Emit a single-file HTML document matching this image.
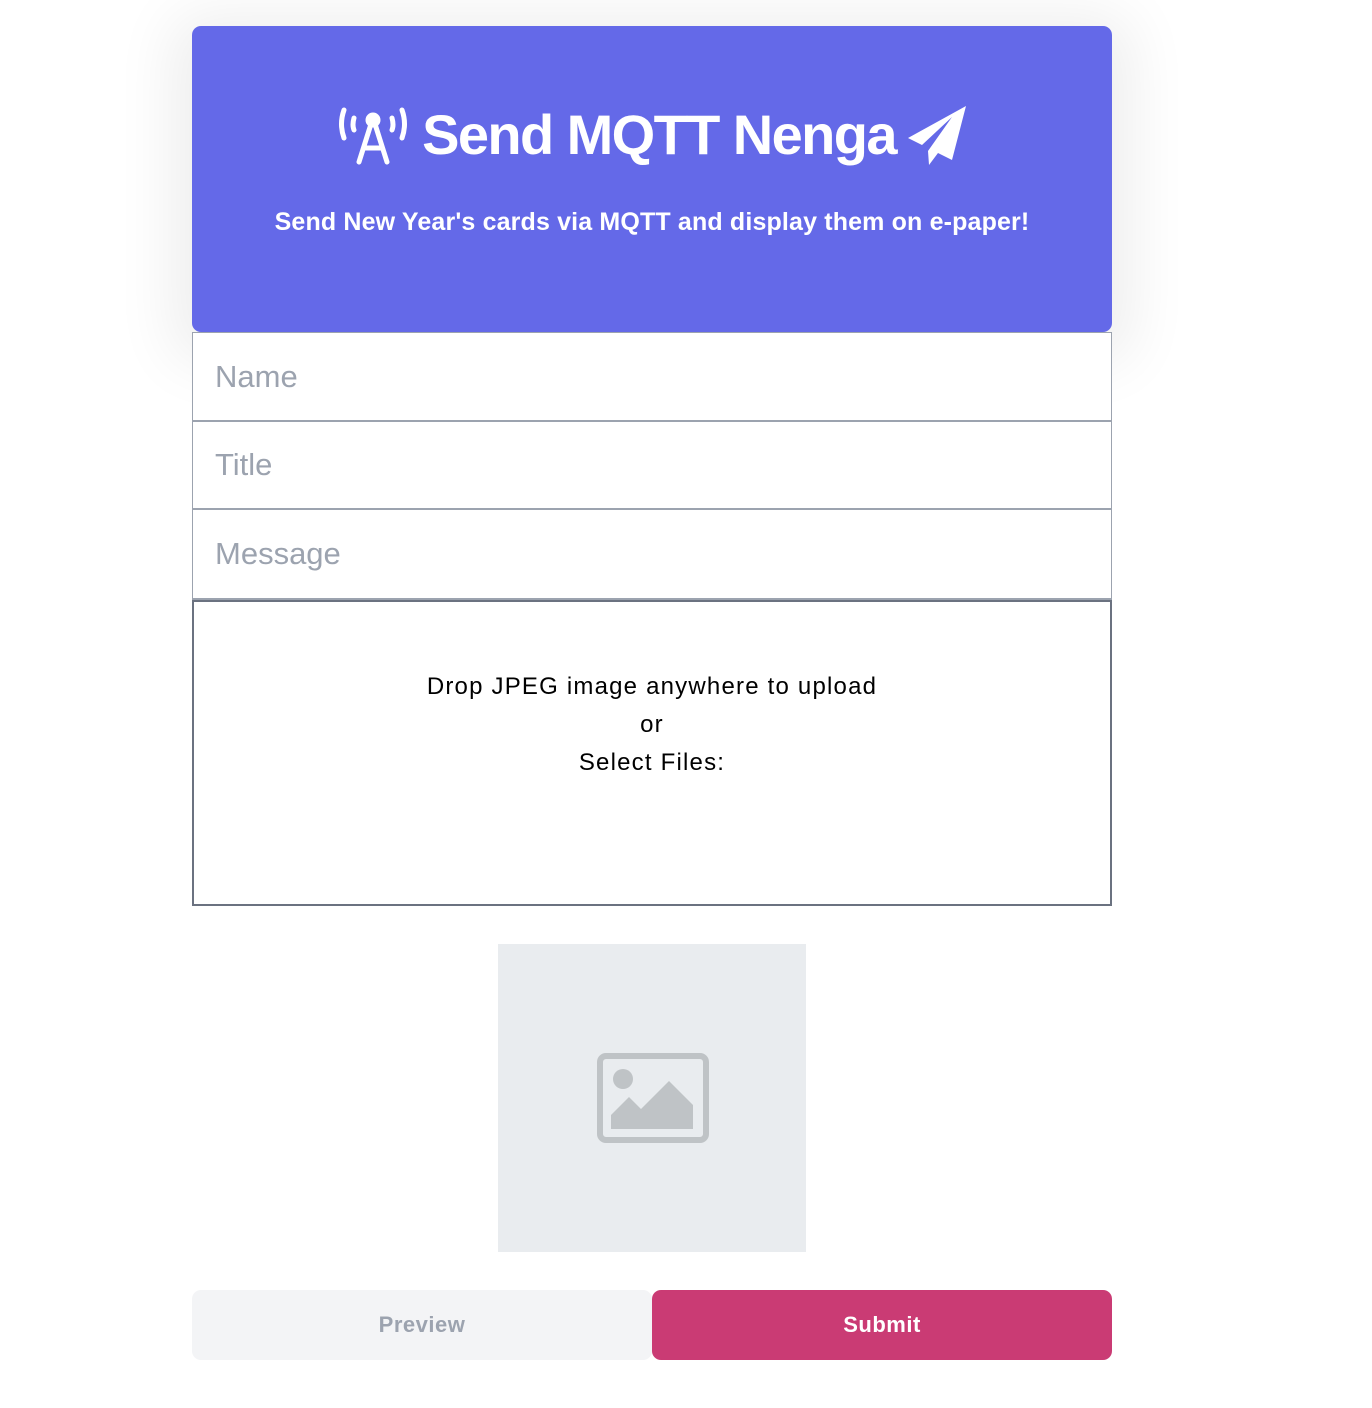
<!DOCTYPE html>
<html><head><style>
*{box-sizing:border-box;margin:0;padding:0}
body{width:1372px;height:1408px;background:#fff;font-family:"Liberation Sans",sans-serif;position:relative;overflow:hidden}
.hdr{position:absolute;left:192px;top:26px;width:920px;height:306px;background:#6469e8;border-radius:9px;box-shadow:0 10px 60px 20px rgba(0,0,0,0.07);color:#fff;text-align:center}
.t{position:absolute;top:76px;left:0;width:100%;font-size:56px;font-weight:bold;letter-spacing:-1.6px;display:flex;justify-content:center;align-items:center;gap:10px}
.s{position:absolute;top:182px;width:100%;font-size:25px;font-weight:bold;letter-spacing:0.15px}
.in{position:absolute;left:192px;width:920px;background:#fff;border:1px solid #9ca3af;border-bottom:3px solid #9ca3af;font-size:31px;color:#9ca3af;padding-left:22px;display:flex;align-items:center}
.drop{position:absolute;left:192px;top:600px;width:920px;height:306px;border:2px solid #6b7280;text-align:center;font-size:24px;line-height:38px;padding-top:66px;color:#000;letter-spacing:1.2px}
.ph{position:absolute;left:498px;top:944px;width:308px;height:308px;background:#e9ecef}
.btn{position:absolute;top:1290px;height:70px;width:460px;border-radius:9px;font-size:22px;font-weight:bold;display:flex;align-items:center;justify-content:center;letter-spacing:0.5px}
</style></head><body>
<div class="hdr">
<div class="t">
<svg width="76" height="62" viewBox="0 0 76 62" fill="none" stroke="#fff" stroke-width="5" stroke-linecap="round"><path d="M8 6q-5 14 0 28M18 14q-2 7 0 12M66 6q5 14 0 28M56 14q2 7 0 12"/><circle cx="37" cy="16" r="5" fill="#fff"/><path d="M35 20L23 58M39 20L51 58M28 44H46"/></svg>
<span>Send MQTT Nenga</span>
<svg width="62" height="62" viewBox="0 0 62 62" fill="#fff"><path d="M60 2L2 34l14 7 30-28-24 34 1 14 9-12 14 7z"/></svg>
</div>
<div class="s">Send New Year's cards via MQTT and display them on e-paper!</div>
</div>
<div class="in" style="top:332px;height:91px">Name</div>
<div class="in" style="top:421px;height:90px">Title</div>
<div class="in" style="top:509px;height:92px">Message</div>
<div class="drop">Drop JPEG image anywhere to upload<br>or<br>Select Files:</div>
<div class="ph"><svg style="position:absolute;left:99px;top:109px" width="112" height="90" viewBox="0 0 112 90"><rect x="3" y="3" width="106" height="84" rx="6" fill="none" stroke="#bfc3c6" stroke-width="6"/><circle cx="26" cy="26" r="10" fill="#bfc3c6"/><path d="M14 76V62l18-18 12 12 28-28 24 24v24z" fill="#bfc3c6"/></svg></div>
<div class="btn" style="left:192px;background:#f3f4f6;color:#9ca3af">Preview</div>
<div class="btn" style="left:652px;background:#ca3b74;color:#fff">Submit</div>
</body></html>
